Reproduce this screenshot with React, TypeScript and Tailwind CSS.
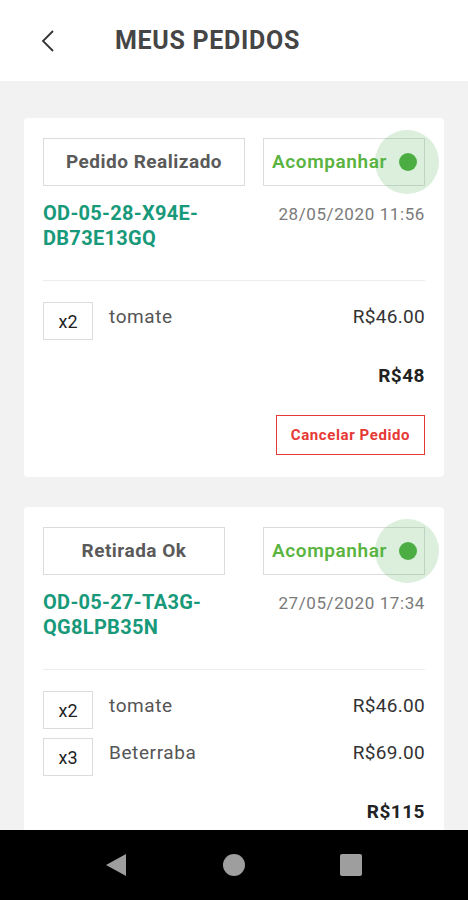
import React from "react";

type Item = { qty: number; name: string; price: string };
type Order = {
  status: string;
  statusWidth: string;
  code: [string, string];
  date: string;
  items: Item[];
  total: string;
  cancel?: boolean;
};

const ORDERS: Order[] = [
  {
    status: "Pedido Realizado",
    statusWidth: "w-[202px]",
    code: ["OD-05-28-X94E-", "DB73E13GQ"],
    date: "28/05/2020 11:56",
    items: [{ qty: 2, name: "tomate", price: "R$46.00" }],
    total: "R$48",
    cancel: true,
  },
  {
    status: "Retirada Ok",
    statusWidth: "w-[182px]",
    code: ["OD-05-27-TA3G-", "QG8LPB35N"],
    date: "27/05/2020 17:34",
    items: [
      { qty: 2, name: "tomate", price: "R$46.00" },
      { qty: 3, name: "Beterraba", price: "R$69.00" },
    ],
    total: "R$115",
  },
];

function OrderCard({ order }: { order: Order }) {
  return (
    <div className="bg-white rounded-[4px] px-[19px] pt-[20px] pb-[22px]">
      {/* status + track */}
      <div className="flex items-center justify-between">
        <div
          className={`${order.statusWidth} h-[48px] border border-[#dcdcdc] flex items-center justify-center text-[19px] tracking-[0.5px] font-bold text-[#5a5a5a]`}
        >
          {order.status}
        </div>
        <div className="relative w-[162px] h-[48px] border border-[#dcdcdc] flex items-center pl-[8px] text-[19px] tracking-[0.6px] font-semibold text-[#5ab43f]">
          Acompanhar
          <span className="absolute right-[-15px] top-[-9px] w-[64px] h-[64px] rounded-full bg-[#4caf50]/20" />
          <span className="absolute right-[7px] top-[14px] w-[18px] h-[18px] rounded-full bg-[#4cae42]" />
        </div>
      </div>

      {/* code + date */}
      <div className="flex justify-between mt-[15px]">
        <div className="text-[20px] leading-[25px] font-bold text-[#17997a] tracking-[0.3px]">
          <div>{order.code[0]}</div>
          <div>{order.code[1]}</div>
        </div>
        <div className="text-[17px] leading-[25px] tracking-[0.6px] text-[#7a7a7a] pt-[1px]">{order.date}</div>
      </div>

      <div className="h-px bg-[#ececec] mt-[29px]" />

      {/* items */}
      <div className="flex flex-col gap-[9px] mt-[21px]">
        {order.items.map((it) => (
          <div key={it.name} className="flex items-start">
            <div className="w-[50px] h-[38px] border border-[#dcdcdc] flex items-center justify-center text-[18px] text-[#222]">
              x{it.qty}
            </div>
            <div className="ml-[16px] flex-1 pt-[2px] text-[19px] leading-[26px] tracking-[0.6px] text-[#555]">{it.name}</div>
            <div className="pt-[2px] text-[19px] leading-[26px] tracking-[0.3px] text-[#333]">{it.price}</div>
          </div>
        ))}
      </div>

      <div className="mt-[23px] text-right text-[19px] leading-[26px] tracking-[0.5px] font-bold text-[#222]">
        {order.total}
      </div>

      {order.cancel && (
        <div className="flex justify-end mt-[26px]">
          <div className="w-[149px] h-[40px] border border-[#e53935] flex items-center justify-center text-[15px] tracking-[0.6px] font-bold text-[#e53935]">
            Cancelar Pedido
          </div>
        </div>
      )}
    </div>
  );
}

export default function App() {
  return (
    <div className="w-[468px] h-[900px] flex flex-col bg-[#f2f2f2] font-['Roboto','Liberation_Sans',sans-serif]">
      {/* Header */}
      <div className="h-[81px] bg-white flex items-center shrink-0">
        <svg width="16" height="24" viewBox="0 0 16 24" className="ml-[40px]">
          <polyline points="13,2 3,12 13,22" fill="none" stroke="#333" strokeWidth="1.8" />
        </svg>
        <h1 className="ml-[59px] text-[25px] font-bold text-[#454545] tracking-[0.7px]">MEUS PEDIDOS</h1>
      </div>

      {/* List */}
      <div className="flex-1 overflow-hidden px-[24px] pt-[37px] flex flex-col gap-[30px]">
        {ORDERS.map((o) => (
          <OrderCard key={o.code[0]} order={o} />
        ))}
      </div>

      {/* Android nav bar */}
      <div className="h-[70px] bg-black shrink-0 flex items-center">
        <svg width="22" height="24" viewBox="0 0 22 24" className="ml-[105px]">
          <polygon points="21,1 21,23 1,12" fill="#9e9e9e" />
        </svg>
        <span className="ml-[96px] w-[22px] h-[22px] rounded-full bg-[#9e9e9e]" />
        <span className="ml-[95px] w-[22px] h-[22px] rounded-[2px] bg-[#9e9e9e]" />
      </div>
    </div>
  );
}
